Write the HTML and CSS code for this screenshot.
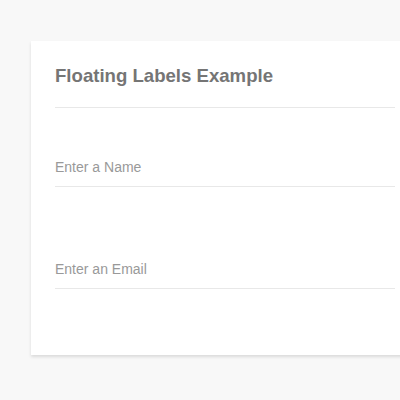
FILE: index.html
```html
<!DOCTYPE html>
<html>
<head>
<meta charset="utf-8">
<link rel="stylesheet" href="styles.css">
</head>
<body>
<div class="card">
  <div class="card-header">
    <h1 class="title">Floating Labels Example</h1>
  </div>
  <form class="form">
    <div class="field">
      <input class="input" type="text" placeholder="Enter a Name">
    </div>
    <div class="field">
      <input class="input" type="email" placeholder="Enter an Email">
    </div>
  </form>
</div>
</body>
</html>
```

FILE: styles.css
```css
html, body {
  margin: 0;
  padding: 0;
  overflow: hidden;
  background: #f8f8f8;
  font-family: "Liberation Sans", Arial, sans-serif;
}
body {
  padding: 41px 0 0 31px;
  height: 400px;
  box-sizing: border-box;
}
.card {
  width: 388px;
  background: #fff;
  box-sizing: border-box;
  padding: 24px 24px 66px 24px;
  box-shadow: 0 2px 3px rgba(0, 0, 0, 0.12);
}
.card-header {
  border-bottom: 1px solid #e8e8e8;
  padding-bottom: 20px;
}
.title {
  margin: 0;
  font-size: 18.6px;
  font-weight: bold;
  color: #757575;
  line-height: 22px;
}
.form {
  display: flex;
  flex-direction: column;
  gap: 64px;
  padding-top: 41px;
}
.field {
  display: flex;
}
.input {
  flex: 1;
  border: 0;
  border-bottom: 1px solid #e8e8e8;
  padding: 10px 0;
  font-family: "Liberation Sans", Arial, sans-serif;
  font-size: 14px;
  color: #555;
  background: transparent;
  outline: none;
  line-height: 17px;
}
.input::placeholder {
  color: #999;
}
```
